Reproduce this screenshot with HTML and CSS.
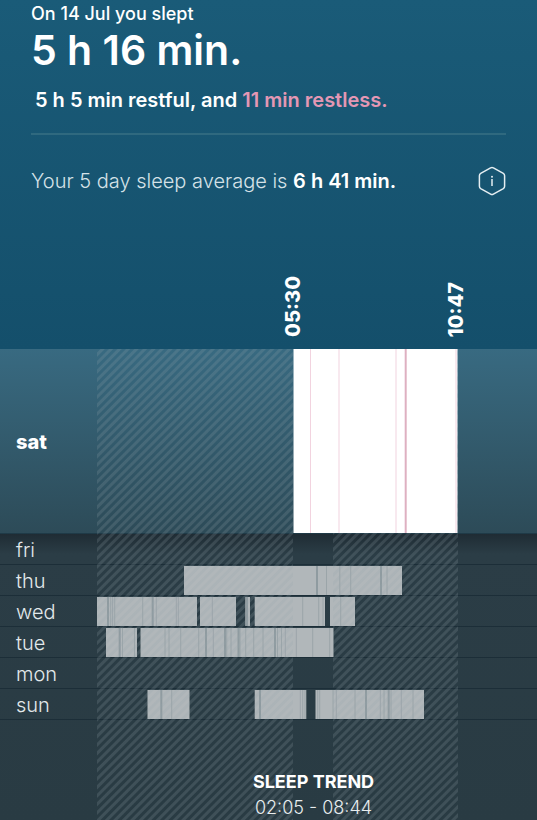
FILE: index.html
```html
<!DOCTYPE html>
<html lang="en">
<head>
<meta charset="utf-8">
<meta name="viewport" content="width=device-width, initial-scale=1">
<title>Sleep</title>
<link rel="stylesheet" href="styles.css">
</head>
<body>
<main class="page">
  <header class="summary">
    <p class="date">On 14 Jul you slept</p>
    <h1 class="total">5 h 16 min.</h1>
    <p class="detail">5 h 5 min restful, and <span class="restless">11 min restless.</span></p>
    <div class="average">
      <p class="average-text">Your 5 day sleep average is <strong>6 h 41 min.</strong></p>
      <button class="info" type="button" aria-label="About sleep average">
        <svg viewBox="0 0 28 30" width="28" height="30" fill="none" stroke="currentColor">
          <path d="M12.600 1.900Q14 1.100 15.400 1.900L25.300 7.400Q26.600 8.200 26.600 9.700V20.300Q26.600 21.800 25.300 22.600L15.400 28.100Q14 28.900 12.600 28.100L2.700 22.600Q1.400 21.800 1.400 20.300V9.700Q1.400 8.200 2.700 7.400Z" stroke-width="1.500"/>
          <path d="M14 13V20" stroke-width="1.500"/>
          <circle cx="14" cy="10.700" r="1" fill="currentColor" stroke="none"/>
        </svg>
      </button>
    </div>
    <div class="times"><time>05:30</time><time>10:47</time></div>
  </header>

  <section class="chart">
    <div class="hatch"><i></i><i></i></div>
    <div class="row today">
      <svg class="track" viewBox="0 0 537 100" preserveAspectRatio="none">
        <path class="bar" d="M293.500 0H457.500V100H293.500Z"/>
        <path class="tick" d="M310.500 0V100M339 0V100M396 0V100M456 0V100"/>
        <path class="tick strong" d="M405.700 0V100"/>
      </svg>
      <span class="day">sat</span>
    </div>
    <div class="past">
    <div class="row"><span class="day">fri</span></div>
    <div class="row">
      <svg class="track" viewBox="0 0 537 100" preserveAspectRatio="none">
        <path class="bar" d="M184 0H402V100H184Z"/>
        <path class="tick strong" d="M317 0V100M381 0V100"/>
        <path class="tick" d="M326.500 0V100M339.800 0V100M350.700 0V100M387 0V100"/>
      </svg>
      <span class="day">thu</span>
    </div>
    <div class="row">
      <svg class="track" viewBox="0 0 537 100" preserveAspectRatio="none">
        <path class="bar" d="M97 0H197V100H97ZM200 0H236V100H200ZM245.300 0H250V100H245.300ZM254.700 0H325V100H254.700ZM330 0H355V100H330Z"/>
        <path class="tick strong" d="M108 0V100M152.700 0V100M247 0V100"/>
        <path class="tick" d="M110.700 0V100M112.600 0V100M114.700 0V100M142.700 0V100M156.300 0V100M176.300 0V100M178.300 0V100M212.300 0V100M302.700 0V100M318.700 0V100M323 0V100M340.700 0V100"/>
      </svg>
      <span class="day">wed</span>
    </div>
    <div class="row">
      <svg class="track" viewBox="0 0 537 100" preserveAspectRatio="none">
        <path class="bar" d="M106 0H137V100H106ZM140.500 0H333.500V100H140.500Z"/>
        <path class="tick strong" d="M119.700 0V100M206 0V100M225 0V100M238.500 0V100M275 0V100"/>
        <path class="tick" d="M122.500 0V100M134.500 0V100M165 0V100M169 0V100M180.700 0V100M198.700 0V100M213.300 0V100M226.700 0V100M231 0V100M240 0V100M245.700 0V100M253.700 0V100M263 0V100M277.500 0V100M281.500 0V100M285.300 0V100M296.300 0V100M312.700 0V100M329.700 0V100"/>
      </svg>
      <span class="day">tue</span>
    </div>
    <div class="row"><span class="day">mon</span></div>
    <div class="row">
      <svg class="track" viewBox="0 0 537 100" preserveAspectRatio="none">
        <path class="bar" d="M147.500 0H189.500V100H147.500ZM254.700 0H306.300V100H254.700ZM315.500 0H424V100H315.500Z"/>
        <path class="tick strong" d="M161.300 0V100M260 0V100M366 0V100M388.700 0V100"/>
        <path class="tick" d="M171.700 0V100M300.300 0V100M302.700 0V100M305 0V100M317.700 0V100M319.700 0V100M333 0V100M336.300 0V100M355 0V100M380.300 0V100M384 0V100M391 0V100M401.300 0V100M413 0V100"/>
      </svg>
      <span class="day">sun</span>
    </div>
    <footer class="trend">
      <h2>SLEEP TREND</h2>
      <p>02:05 - 08:44</p>
    </footer>
    </div>
  </section>
</main>
</body>
</html>
```

FILE: styles.css
```css
* { box-sizing: border-box; }

body, h1, h2, p { margin: 0; }

body {
  background: #293b43;
  color: #fff;
  font-family: Inter, "Liberation Sans", sans-serif;
}

.page {
  display: flex;
  flex-direction: column;
  min-height: 100vh;
  overflow: hidden;
}

.summary {
  padding: 4px 31px 12px;
  background: linear-gradient(#1a5b78, #144f6b);
}

.date { font-size: 18px; line-height: 20px; font-weight: 500; }
.total { font-size: 41px; line-height: 52px; font-weight: 600; }
.detail { padding: 12px 4px 20px; font-size: 20px; line-height: 25px; font-weight: 600; }
.restless { color: #e497b4; }

.average {
  display: flex;
  align-items: center;
  justify-content: space-between;
  padding-top: 31px;
  border-top: 2px solid #2f697f;
}

.average-text { font-size: 20px; line-height: 30px; font-weight: 300; color: #d5e2e8; }
.average-text strong { font-weight: 600; color: #fff; }

.info {
  width: 28px;
  height: 30px;
  padding: 0;
  border: 0;
  background: none;
  color: #e5eef2;
}
.info svg { display: block; }

.times {
  display: grid;
  grid-template-columns: 211fr 164fr 162fr;
  align-items: end;
  height: 141px;
  margin: 0 -31px;
}
.times time {
  justify-self: center;
  writing-mode: vertical-rl;
  transform: rotate(180deg);
  font-size: 20px;
  line-height: 28px;
  font-weight: 800;
}
.times time:first-child { grid-column: 2; }

.chart { position: relative; flex: 1; display: flex; flex-direction: column; }

.hatch {
  position: absolute;
  inset: 0;
  z-index: 1;
  display: grid;
  grid-template-columns: 97fr 196fr 40fr 125fr 79fr;
  pointer-events: none;
}
.hatch i {
  grid-column: 2;
  background: repeating-linear-gradient(135deg, rgba(150, 165, 172, 0) 0 2px, rgba(150, 165, 172, 0.2) 3px 5px, rgba(150, 165, 172, 0) 6px);
}
.hatch i + i { grid-column: 4; }

.row {
  display: grid;
  align-items: center;
  height: 31px;
  border-bottom: 1px solid #1c2e38;
}
.track, .day { grid-area: 1 / 1; }
.track { display: block; width: 100%; height: 29px; }
.day { padding: 2px 0 0 16px; font-size: 20px; line-height: 24px; font-weight: 300; color: #e3e9eb; }

.today {
  height: 185px;
  border-color: #1f3a47;
  background: linear-gradient(#386a81, #2d4b58);
}
.today .track { position: relative; z-index: 2; height: 184px; }
.today .day { font-weight: 800; color: #fff; }

.past { flex: 1; background: linear-gradient(#1f2c34, #2b3d46 20px, #293b43); }

.bar { fill: #b1b7ba; }
.tick { fill: none; stroke: #87939a; stroke-width: 1; opacity: 0.8; }
.strong { stroke-width: 2; }
.today .bar { fill: #fff; }
.today .tick { stroke: #f2d3df; opacity: 1; }
.today .strong { stroke: #deb0c1; }

.trend {
  position: relative;
  z-index: 2;
  padding: 49px 0 0 90px;
  text-align: center;
}
.trend h2 { font-size: 18px; line-height: 26px; font-weight: 700; }
.trend p { height: 24px; font-size: 18px; line-height: 26px; font-weight: 300; color: #e8edef; }
```
